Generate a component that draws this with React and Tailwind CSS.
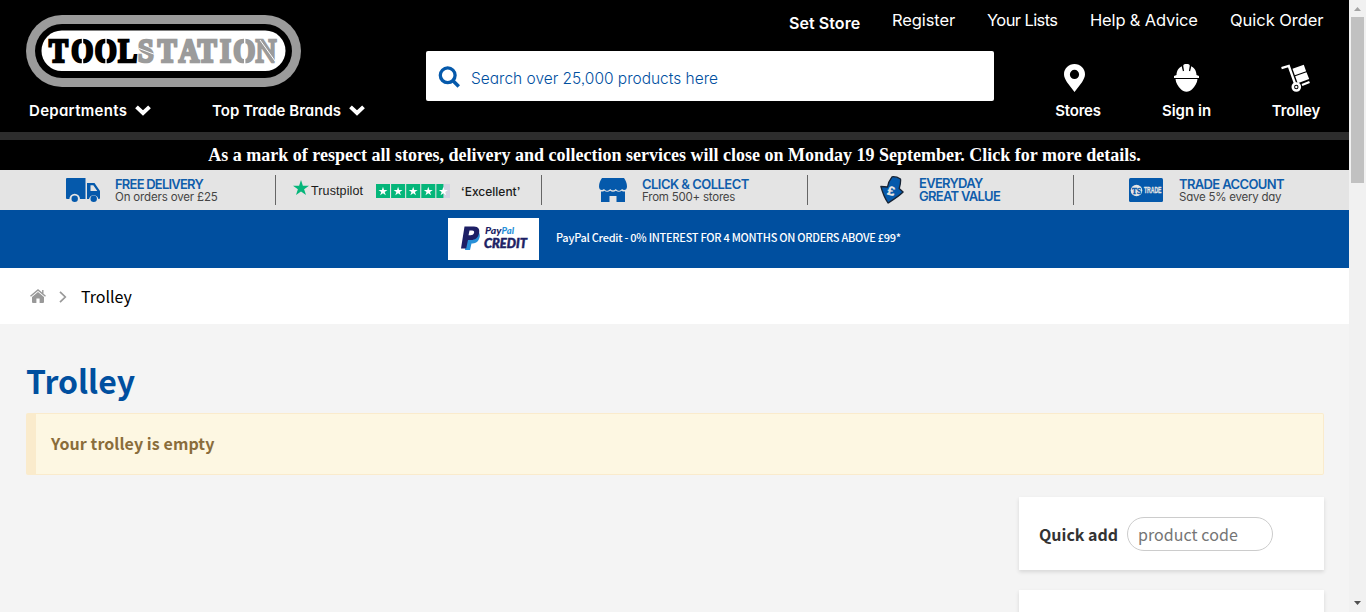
import React from "react";

const gil = "font-['Inter',sans-serif] [font-feature-settings:'cv11','ss03'] whitespace-nowrap";
const src = "font-['Noto_Sans_CJK_SC',sans-serif] whitespace-nowrap";

function Logo() {
  return (
    <svg width="275" height="72" viewBox="0 0 275 72" role="img" aria-label="Toolstation">
      <rect width="275" height="72" rx="36" fill="#9b9b9b" />
      <rect x="9" y="9" width="257" height="54" rx="27" fill="#000" />
      <rect x="15.500" y="15.500" width="244" height="40.500" rx="20.250" fill="#fff" />
      <g transform="scale(.86 1)" fontFamily="Liberation Serif, serif" fontWeight="700" fontSize="33" strokeWidth="2.7">
        <text x="26.700 52.700 80 107.300" y="47" fill="#000" stroke="#000">TOOL</text>
        <text x="130.300 153.300 177.500 199.600 225.600 240.900 267.200" y="47" fill="#9b9b9b" stroke="#9b9b9b">STATION</text>
      </g>
      <path stroke="#fff" strokeWidth="1.400" d="M56.500 23v27M80 23v27M218.700 23v27" />
      <path stroke="#fff" strokeWidth="1" d="m113 33.500 16 6M234 25l15 21" />
    </svg>
  );
}

function Chevron() {
  return (
    <svg width="16" height="11" viewBox="0 0 16 11">
      <path d="M1.500 1.800 8 8l6.500-6.200" fill="none" stroke="#fff" strokeWidth="3.900" />
    </svg>
  );
}

function PinIcon() {
  return (
    <svg width="21" height="28" viewBox="0 0 21 28">
      <path fillRule="evenodd" fill="#fff" d="M10.500 0C4.700 0 0 4.500 0 10.200c0 2.500 1.200 5 3 8L10.500 28 18 18.200c1.800-3 3-5.500 3-8C21 4.500 16.300 0 10.500 0Zm0 5.800a4.600 4.600 0 1 1 0 9.200 4.600 4.600 0 0 1 0-9.200Z" />
    </svg>
  );
}

function HelmetIcon() {
  return (
    <svg width="25" height="28" viewBox="0 0 25 28">
      <path fill="#fff" d="M9.300 1.200C9.500.3 10.800 0 12.500 0s3 .3 3.200 1.200V7l1-5c3.700 1.500 5.800 5 5.800 9.100L25 12v2H0v-2l2.500-.9C2.500 7 4.600 3.500 8.300 2l1 5V1.200ZM1.500 15h22c-.4 4-2.500 7.500-5.400 10.300-2.700 3.200-8.500 3.200-11.200 0C4 22.500 1.900 19 1.500 15Z" />
      <path stroke="#000" strokeWidth="1.200" d="m8.300 2 1.200 5M16.700 2l-1.200 5" />
    </svg>
  );
}

function TrolleyIcon() {
  return (
    <svg width="29" height="28" viewBox="0 0 29 28" fill="#fff">
      <path d="M.5 4.200 7.800 2l6.400 18M21 21l7.500-3" fill="none" stroke="#fff" strokeWidth="2.300" />
      <path d="m11.500 4.700 11.300-4 2.300 6.600-11.300 4Z M14.200 12.300l11.300-4 2.700 6.700-11.500 4.200Z" />
      <circle cx="15.300" cy="23" r="3.500" fill="#000" stroke="#fff" strokeWidth="2.600" />
      <circle cx="15.300" cy="23" r="1.200" />
    </svg>
  );
}

function TruckIcon() {
  return (
    <svg width="34" height="24" viewBox="0 0 34 24">
      <path fill="#0559ab" fillRule="evenodd" d="M1 0h18.500v21H14a5.300 5.300 0 0 0-10.600 0H1a1 1 0 0 1-1-1V1a1 1 0 0 1 1-1ZM21 5h7.500L34 13v7a1 1 0 0 1-1 1h-.6a4.800 4.800 0 0 0-9.400 0h-2V5Zm3.500 2.300V13h6.800l-4-5.700Z" />
      <circle cx="8.700" cy="20.800" r="3.200" fill="#0559ab" />
      <circle cx="27.700" cy="20.800" r="3.200" fill="#0559ab" />
    </svg>
  );
}

function StoreIcon() {
  return (
    <svg width="28" height="25" viewBox="0 0 28 25" fill="#0559ab">
      <path d="M3 0h22c1.500 2 3 5 3 8.500 0 3.500-3 4.700-5 2.500-1.800 2.400-4.500 2.400-6.200 0-1.300 1.800-4.300 1.800-5.600 0-1.700 2.400-4.400 2.400-6.200 0-2 2.200-5 1-5-2.500C0 5 1.500 2 3 0Z" />
      <path d="M2 13.500c1.300.3 2.400 0 3.200-.8 1.800 1.500 4.200 1.500 6 0 1.600 1.300 4 1.300 5.600 0 1.800 1.500 4.200 1.500 6 0 .8.8 2 1.100 3.200.8v10.500h-8.500v-6h-7v6H2V13.500Z" />
    </svg>
  );
}

function PoundIcon() {
  return (
    <svg width="24" height="28" viewBox="0 0 24 28">
      <path d="M12 .8c2.500-.3 6 .6 8.500 2.200.5 3.500-.5 6.500-1.300 9.500l3.900 3.500c-4.500 4.500-9.500 7.500-15.100 11C5 22.500 2.500 16.500.9 10.500l6.600.5C8 7.500 9.500 4 12 .8Z" fill="#0559ab" stroke="#172334" strokeWidth="1.300" strokeLinejoin="round" />
      <text x="7" y="19.500" transform="rotate(12 11 15)" fontFamily="Inter, sans-serif" fontWeight="800" fontSize="12.500" fill="#e4e4e4">£</text>
    </svg>
  );
}

function TradeIcon() {
  return (
    <svg width="34" height="24" viewBox="0 0 34 24">
      <rect width="34" height="24" rx="1.500" fill="#0559ab" />
      <circle cx="7.500" cy="12.500" r="5.800" fill="#e4e4e4" />
      <text x="3" y="15.500" textLength="9" lengthAdjust="spacingAndGlyphs" fontFamily="Liberation Serif, serif" fontWeight="700" fontSize="9" fill="#0559ab" stroke="#0559ab" strokeWidth=".4">TS</text>
      <text x="15" y="15.400" textLength="17.500" lengthAdjust="spacingAndGlyphs" fontFamily="Liberation Sans, sans-serif" fontWeight="700" fontSize="8.500" fill="#e4e4e4" stroke="#e4e4e4" strokeWidth=".3">TRADE</text>
    </svg>
  );
}

const STAR = "M8 0 9.900 5.700H16l-4.900 3.600 1.900 5.800L8 11.500l-5 3.600 1.900-5.800L0 5.700h6.100Z";

function Rating() {
  return (
    <svg width="74" height="14" viewBox="0 0 74 14">
      {[0, 1, 2, 3, 4].map((i) => (
        <g key={i} transform={`translate(${i * 15.100} 0)`}>
          <rect width="14" height="14" fill={i === 4 ? "#d4d3e2" : "#05b67a"} />
          {i === 4 && <rect width="7" height="14" fill="#05b67a" />}
          <path d={STAR} transform="translate(2.500 2.700) scale(.56)" fill="#fff" />
        </g>
      ))}
    </svg>
  );
}

function PayPalCredit() {
  return (
    <svg width="91" height="42" viewBox="0 0 91 42">
      <rect width="91" height="42" fill="#fff" />
      <path fill="#2790d8" d="M20 13h10c2 2 2.500 5 1 8-1.500 3.500-4 4.500-7.500 4.500L22 32h-5Z" />
      <path fill="#1d1f65" d="M16.500 8.500H26c4.500 0 6 3 5 7-1 4.500-4 6.500-8 6.500h-3l-1.800 8.500H13Z" />
      <path fill="#fff" d="M21.500 12.500H24c2 0 2.500 1.300 2 2.600-.5 1.600-1.700 2.200-3.500 2.200h-2Z" />
      <g fontFamily="Lato, sans-serif" fontStyle="italic" fontWeight="900">
        <text x="37" y="16" textLength="16.500" lengthAdjust="spacingAndGlyphs" fontSize="9" fill="#1d1f65">Pay</text>
        <text x="53.500" y="16" textLength="12.500" lengthAdjust="spacingAndGlyphs" fontSize="9" fill="#2790d8">Pal</text>
        <text x="36" y="30.300" textLength="43" lengthAdjust="spacingAndGlyphs" fontSize="13.500" fill="#1d1f65" stroke="#1d1f65" strokeWidth=".5">CREDIT</text>
      </g>
    </svg>
  );
}

function Header() {
  return (
    <header className="grid h-[132px] grid-cols-[400px_568px_330px] grid-rows-[51px_50px_31px] bg-black pl-[26px] text-white">
      <a className="row-span-2 mt-[15px] block">
        <Logo />
      </a>
      <nav className={`${gil} col-span-2 flex gap-8 pl-[363px] pt-[10px] text-[16.500px] leading-5`}>
        <a className="w-[71px] pt-[3px] text-[16px] font-semibold tracking-[0.070px]">Set Store</a>
        <a className="w-[63px] tracking-[-0.100px]">Register</a>
        <a className="w-[71px] tracking-[-0.600px]">Your Lists</a>
        <a className="w-[108px] tracking-[-0.150px]">Help &amp; Advice</a>
        <a className="w-[94px] tracking-[-0.040px]">Quick Order</a>
      </nav>
      <div className="flex items-center rounded-[2px] bg-white pl-3">
        <svg width="22" height="22" viewBox="0 0 22 22" className="mt-[2px]">
          <circle cx="9.700" cy="9.300" r="7.400" fill="none" stroke="#0559ab" strokeWidth="3.300" />
          <path d="m15 14.700 5.800 5.800" stroke="#0559ab" strokeWidth="3.600" />
        </svg>
        <span className={`${gil} ml-[11px] mt-[6px] text-[15.500px] font-light leading-5 tracking-[-0.010px] text-[#004f9f]`}>Search over 25,000 products here</span>
      </div>
      <nav className={`${gil} row-span-2 flex justify-between pl-[61px] pr-1 pt-[13px] text-[15px] font-semibold leading-5`}>
        <a className="flex w-[46px] flex-col items-center gap-[9px] tracking-[-0.200px]">
          <span className="-ml-2"><PinIcon /></span>
          <span>Stores</span>
        </a>
        <a className="flex w-[49px] flex-col items-center gap-[9px] tracking-[0.020px]">
          <HelmetIcon />
          <span>Sign in</span>
        </a>
        <a className="flex w-[48px] flex-col items-center gap-[9px] tracking-[-0.080px]">
          <span className="-ml-[2px]"><TrolleyIcon /></span>
          <span>Trolley</span>
        </a>
      </nav>
      <nav className={`${gil} col-start-1 row-start-3 flex pl-[3px] text-[15px] font-semibold leading-5`}>
        <a className="flex w-[183px] gap-2">
          <span className="w-[98px] tracking-[0.300px]">Departments</span>
          <span className="pt-1"><Chevron /></span>
        </a>
        <a className="flex gap-2">
          <span className="w-[129px] tracking-[0.020px]">Top Trade Brands</span>
          <span className="pt-1"><Chevron /></span>
        </a>
      </nav>
    </header>
  );
}

function Usps() {
  const cell = "flex h-[30px] w-[266px] items-center border-r border-[#666]";
  const head = "block text-[13px] font-semibold leading-[13px] text-[#0f5dab]";
  const sub = "block text-[11.500px] leading-[12px] text-[#444]";
  return (
    <section className={`${gil} flex h-10 items-center bg-[#e4e4e4] pl-[10px]`}>
      <div className={`${cell} pl-14`}>
        <TruckIcon />
        <div className="ml-[15px]">
          <span className={`${head} tracking-[-0.780px]`}>FREE DELIVERY</span>
          <span className={`${sub} tracking-[-0.160px]`}>On orders over £25</span>
        </div>
      </div>
      <div className={`${cell} pl-[17px]`}>
        <svg width="16" height="16" viewBox="0 0 16 16" className="-mt-1"><path d={STAR} fill="#05b67a" /></svg>
        <span className="ml-[2px] mt-[2px] w-[53px] font-['Liberation_Sans',sans-serif] text-[12.500px] leading-4 tracking-[0.120px] text-[#1b1b1b]">Trustpilot</span>
        <span className="ml-3 mt-[2px]"><Rating /></span>
        <span className="ml-[11px] mt-[3px] text-[12px] font-medium leading-4 text-[#1b1b1b]">‘Excellent’</span>
      </div>
      <div className={`${cell} pl-[57px]`}>
        <StoreIcon />
        <div className="ml-[15px]">
          <span className={`${head} tracking-[-0.530px]`}>CLICK &amp; COLLECT</span>
          <span className={`${sub} tracking-[-0.220px]`}>From 500+ stores</span>
        </div>
      </div>
      <div className={`${cell} pl-[72px]`}>
        <PoundIcon />
        <div className="ml-[15px]">
          <span className={`${head} tracking-[-0.720px]`}>EVERYDAY</span>
          <span className={`${head} tracking-[-0.720px]`}>GREAT VALUE</span>
        </div>
      </div>
      <div className="flex h-[30px] w-[266px] items-center pl-[55px]">
        <TradeIcon />
        <div className="ml-4">
          <span className={`${head} tracking-[-0.640px]`}>TRADE ACCOUNT</span>
          <span className={`${sub} tracking-[-0.240px]`}>Save 5% every day</span>
        </div>
      </div>
    </section>
  );
}

function Scrollbar() {
  return (
    <aside className="flex w-[17px] flex-col items-center justify-between bg-[#f1f1f1]">
      <div className="flex flex-col items-center">
        <svg width="17" height="17" viewBox="0 0 17 17"><path d="M5 11h7L8.500 7Z" fill="#a3a3a3" /></svg>
        <div className="h-[166px] w-[13px] bg-[#c1c1c1]" />
      </div>
      <svg width="17" height="17" viewBox="0 0 17 17"><path d="M5 6h7l-3.500 4Z" fill="#505050" /></svg>
    </aside>
  );
}

export default function App() {
  return (
    <div className="flex h-[612px] w-[1366px] overflow-hidden bg-[#f4f4f4]">
      <div className="w-[1349px]">
        <Header />
        <div className="h-2 bg-[#2d2d2d]" />
        <div className="h-[30px] bg-black text-center font-['Liberation_Serif',serif] text-[18px] font-bold leading-[31px] text-white">
          As a mark of respect all stores, delivery and collection services will close on Monday 19 September. Click for more details.
        </div>
        <Usps />
        <div className="flex h-[58px] items-center bg-[#004f9f] pl-[448px]">
          <PayPalCredit />
          <span className={`${src} -mt-1 ml-[17px] text-[11px] font-medium leading-4 tracking-[-0.270px] text-white`}>PayPal Credit - 0% INTEREST FOR 4 MONTHS ON ORDERS ABOVE £99*</span>
        </div>
        <div className="flex h-14 items-center bg-white pl-[30px]">
          <svg width="16" height="14" viewBox="0 0 16 14" fill="#999">
            <path d="M8 2.900 14 8v5a1 1 0 0 1-1 1H9.600V9.500H6.400V14H3a1 1 0 0 1-1-1V8Z" />
            <path d="M.5 7.200 8 1l7.500 6.200M12.800 1v3.500" fill="none" stroke="#999" strokeWidth="1.400" />
          </svg>
          <svg width="8" height="12" viewBox="0 0 8 12" className="ml-[13px] mt-[2px]"><path d="m1 .8 5.300 5.200L1 11.200" fill="none" stroke="#999" strokeWidth="1.700" /></svg>
          <span className={`${src} ml-[14px] text-[16px] leading-6 text-black`}>Trolley</span>
        </div>
        <main className="flex flex-col pl-[26px] pr-[25px] pt-[34px]">
          <h1 className={`${src} text-[32px] font-bold leading-[44px] text-[#004f9f]`}>Trolley</h1>
          <div className={`${src} mt-[11px] h-[62px] rounded-[2px] border border-l-[10px] border-[#faebcc] bg-[#fdf7e2] pl-[15px] text-[16px] font-bold leading-[58px] tracking-[0.080px] text-[#8a6d3b]`}>
            Your trolley is empty
          </div>
          <div className="mt-[22px] flex w-[305px] flex-col gap-5 self-end">
            <div className={`${src} flex h-[73px] items-center bg-white pl-5 shadow-[0_2px_4px_rgba(0,0,0,0.12)]`}>
              <span className="w-[88px] text-[16px] font-bold leading-6 text-[#333]">Quick add</span>
              <input aria-label="product code" placeholder="product code" className="h-[34px] w-[146px] rounded-full border border-[#ccc] px-[10px] text-[16px] tracking-[0.060px] text-[#333] outline-none placeholder:text-[#757575]" />
            </div>
            <div className="h-[60px] bg-white shadow-[0_2px_4px_rgba(0,0,0,0.12)]" />
          </div>
        </main>
      </div>
      <Scrollbar />
    </div>
  );
}
